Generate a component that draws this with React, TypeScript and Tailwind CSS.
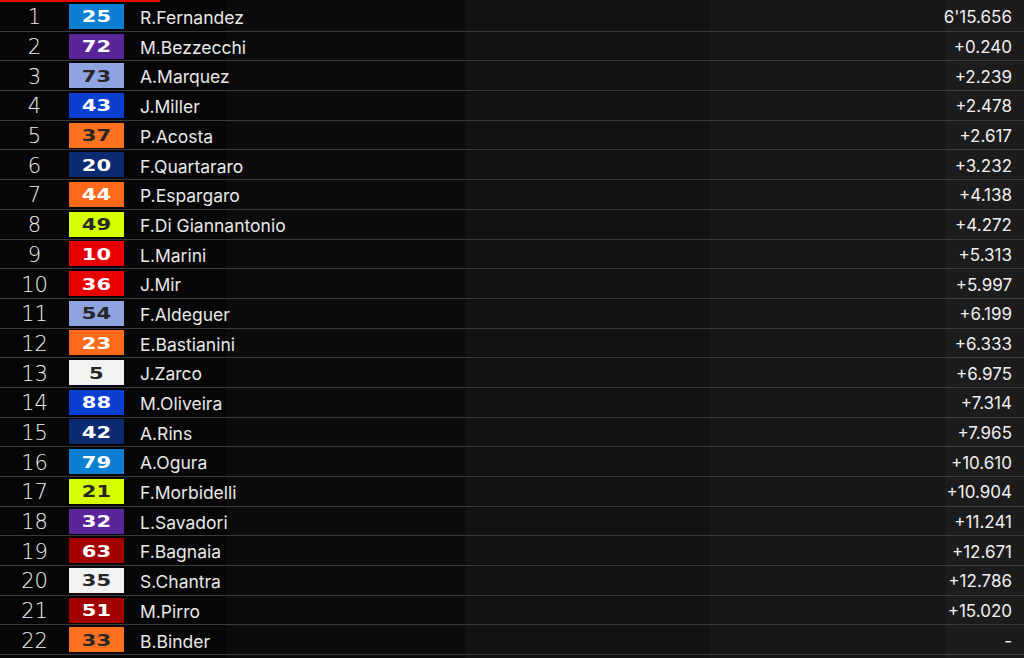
import React from "react";

type Row = { pos: number; num: string; bg: string; dark: boolean; name: string; time: string };

const rows: Row[] = [
  { pos: 1, num: "25", bg: "bg-[#0c7fd3]", dark: false, name: "R.Fernandez", time: "6'15.656" },
  { pos: 2, num: "72", bg: "bg-[#5a2599]", dark: false, name: "M.Bezzecchi", time: "+0.240" },
  { pos: 3, num: "73", bg: "bg-[#8fa3e0]", dark: true, name: "A.Marquez", time: "+2.239" },
  { pos: 4, num: "43", bg: "bg-[#0a3fd0]", dark: false, name: "J.Miller", time: "+2.478" },
  { pos: 5, num: "37", bg: "bg-[#ff7020]", dark: true, name: "P.Acosta", time: "+2.617" },
  { pos: 6, num: "20", bg: "bg-[#0c2a70]", dark: false, name: "F.Quartararo", time: "+3.232" },
  { pos: 7, num: "44", bg: "bg-[#ff6a1a]", dark: false, name: "P.Espargaro", time: "+4.138" },
  { pos: 8, num: "49", bg: "bg-[#d6ff00]", dark: true, name: "F.Di Giannantonio", time: "+4.272" },
  { pos: 9, num: "10", bg: "bg-[#e60000]", dark: false, name: "L.Marini", time: "+5.313" },
  { pos: 10, num: "36", bg: "bg-[#e60000]", dark: false, name: "J.Mir", time: "+5.997" },
  { pos: 11, num: "54", bg: "bg-[#8fa3e0]", dark: true, name: "F.Aldeguer", time: "+6.199" },
  { pos: 12, num: "23", bg: "bg-[#ff6a1a]", dark: false, name: "E.Bastianini", time: "+6.333" },
  { pos: 13, num: "5", bg: "bg-[#f2f2f2]", dark: true, name: "J.Zarco", time: "+6.975" },
  { pos: 14, num: "88", bg: "bg-[#0a3fd0]", dark: false, name: "M.Oliveira", time: "+7.314" },
  { pos: 15, num: "42", bg: "bg-[#0c2a70]", dark: false, name: "A.Rins", time: "+7.965" },
  { pos: 16, num: "79", bg: "bg-[#0c7fd3]", dark: false, name: "A.Ogura", time: "+10.610" },
  { pos: 17, num: "21", bg: "bg-[#d6ff00]", dark: true, name: "F.Morbidelli", time: "+10.904" },
  { pos: 18, num: "32", bg: "bg-[#5a2599]", dark: false, name: "L.Savadori", time: "+11.241" },
  { pos: 19, num: "63", bg: "bg-[#a30000]", dark: false, name: "F.Bagnaia", time: "+12.671" },
  { pos: 20, num: "35", bg: "bg-[#f2f2f2]", dark: true, name: "S.Chantra", time: "+12.786" },
  { pos: 21, num: "51", bg: "bg-[#a30000]", dark: false, name: "M.Pirro", time: "+15.020" },
  { pos: 22, num: "33", bg: "bg-[#ff7020]", dark: true, name: "B.Binder", time: "-" },
];

export default function App() {
  return (
    <div className="relative w-[1024px] h-[658px] overflow-hidden pt-[2px] bg-[linear-gradient(to_right,#060606_0px,#060606_227px,#0b0b0b_227px,#0b0b0b_465px,#121212_465px,#121212_710px,#171717_710px,#171717_945px,#1c1c1c_945px,#1c1c1c_1024px)]">
      <div className="absolute top-0 left-0 w-[160px] h-[2px] bg-[#e10600]" />
      {rows.map((r) => (
        <div
          key={r.pos}
          className="flex items-center h-[29.7px] border-b-[1.5px] border-[#3a3a3a]"
        >
          <div className="w-[69px] pt-[3px] text-center text-[21px] leading-none text-[#f0f0f0] font-extralight font-['DejaVu_Sans',sans-serif]">
            {r.pos}
          </div>
          <div className={`w-[55px] h-[25px] flex items-center justify-center ${r.bg}`}>
            <span
              className={`inline-block mt-[3px] scale-x-[1.4] text-[15px] font-bold leading-none font-['DejaVu_Sans',sans-serif] ${r.dark ? "text-[#262626]" : "text-white"}`}
            >
              {r.num}
            </span>
          </div>
          <div className="ml-4 flex-1 pt-[3px] text-[17.5px] leading-none text-[#e8e8e8] font-['Inter',sans-serif]">
            {r.name}
          </div>
          <div className="pr-3 pt-[3px] text-[17px] leading-none text-[#f0f0f0] font-['Inter',sans-serif]">
            {r.time}
          </div>
        </div>
      ))}
    </div>
  );
}
